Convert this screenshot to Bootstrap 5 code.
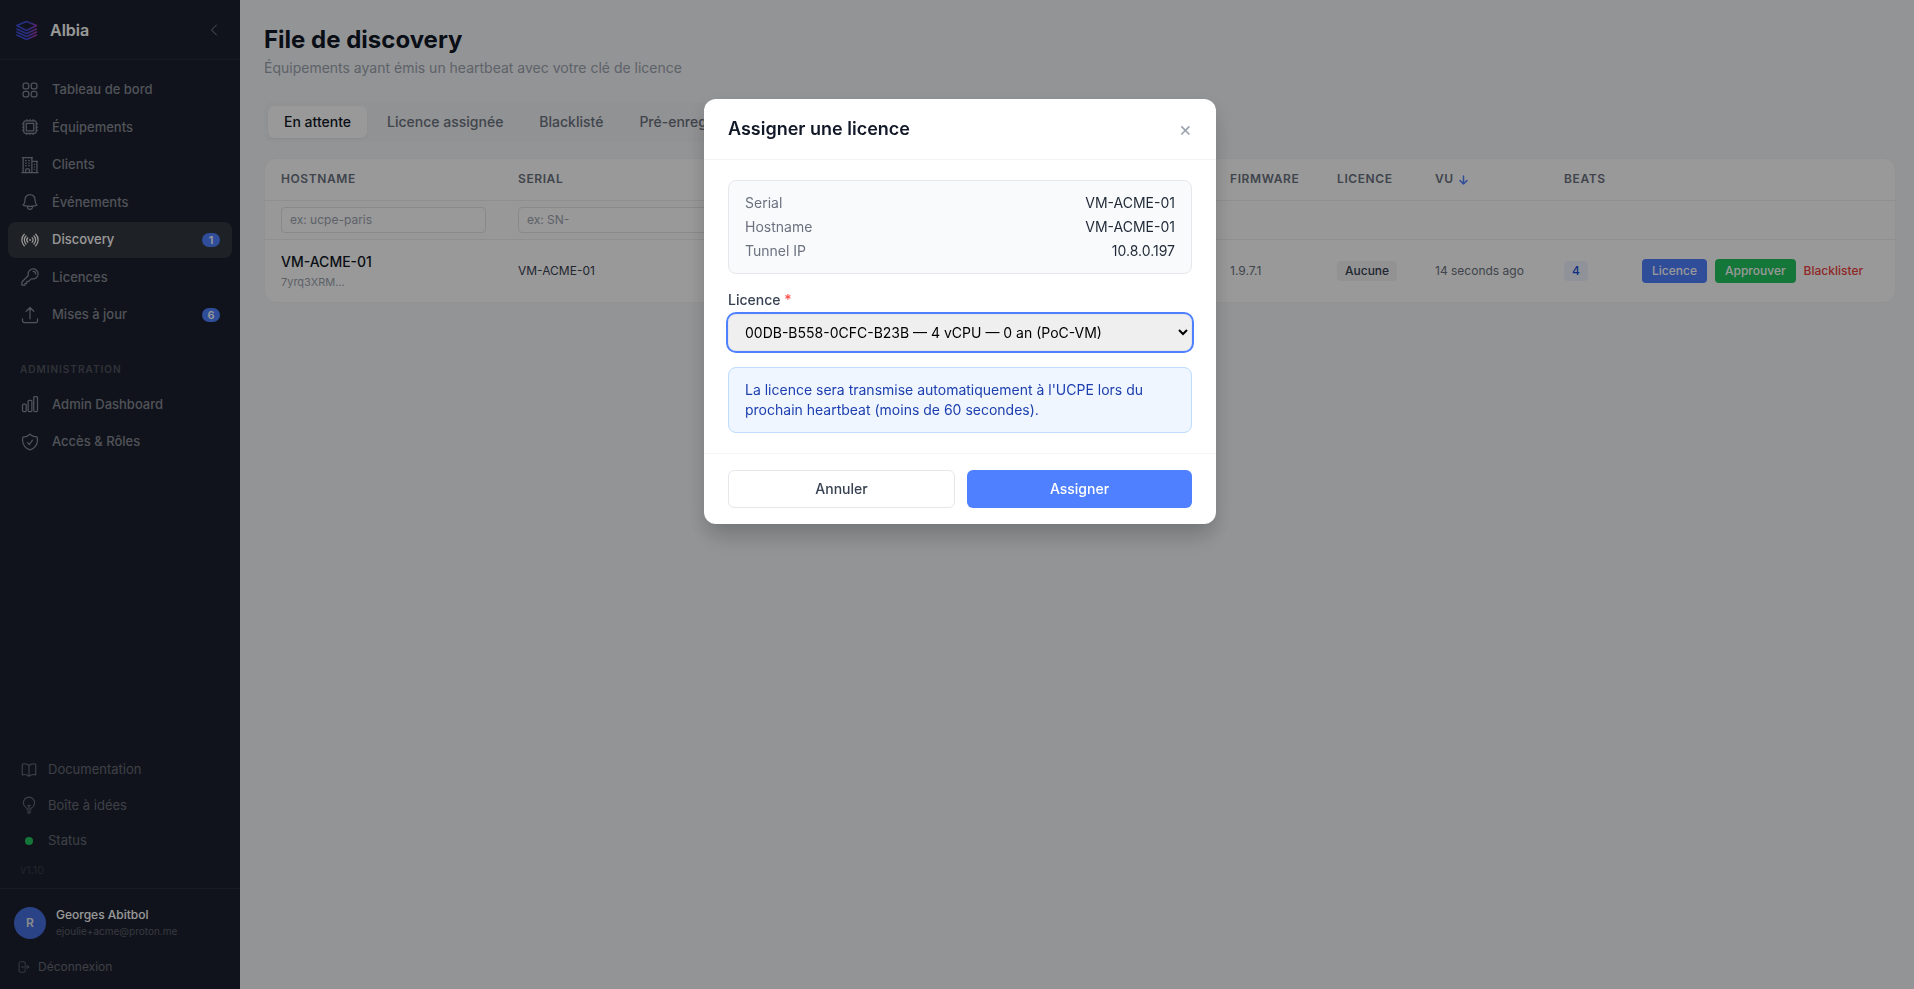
<!DOCTYPE html>
<html lang="fr">
<head>
<meta charset="utf-8">
<meta name="viewport" content="width=device-width, initial-scale=1">
<title>Albia – File de discovery</title>
<link href="https://cdn.jsdelivr.net/npm/bootstrap@5.3.0/dist/css/bootstrap.min.css" rel="stylesheet">
<style>
  body { font-family: Inter, "Liberation Sans", sans-serif; font-size: 14px; line-height: 20px; background: #f5f7fa; color: #111827; }
  a { text-decoration: none; }
  .ico { fill: none; stroke: currentColor; stroke-width: 1.5; stroke-linecap: round; stroke-linejoin: round; flex: none; }

  /* Sidebar */
  .sidebar { width: 240px; background: #1c212e; color: #868a94; font-size: 13px; line-height: 1.5; }
  .brand { height: 60px; padding: 0 18px 0 16px; border-bottom: 1px solid #282d3a; }
  .brand-name { font-size: 16px; font-weight: 600; color: #fff; }
  .collapse-btn { color: #868a94; }
  .menu { padding: 12px 8px; gap: 2px; }
  .menu a { color: #868a94; font-weight: 500; padding: 8px 12px; gap: 12px; border-radius: 8px; }
  .menu a .ico { margin-block: -1px; }
  .menu a.active { background: #33373f; color: #fff; }
  .count { width: 18px; height: 14px; border-radius: 7px; background: #4f80ff; color: #fff; font-size: 11px; font-weight: 600; line-height: 14px; }
  .menu-title { padding: 26px 12px 8px; font-size: 10px; line-height: 16px; font-weight: 600; letter-spacing: 1px; color: #50545e; }
  .links { padding: 0 8px; }
  .links a { color: #686c76; padding: 8px 12px; gap: 10px; }
  .dot { width: 8px; height: 8px; margin: 0 5px; border-radius: 50%; background: #22c55e; }
  .version { padding: 3px 20px 10px; font-size: 11px; color: #373c48; }
  .account { border-top: 1px solid #282d3a; padding: 18px 14px 13px; }
  .person { gap: 10px; }
  .avatar { width: 32px; height: 32px; border-radius: 50%; background: #466fe0; color: #e5e7eb; font-size: 12px; font-weight: 600; }
  .user-name { font-size: 12px; font-weight: 500; line-height: 16px; color: #fff; }
  .user-mail { font-size: 10px; line-height: 16px; color: #5c606b; }
  .logout { margin-top: 19px; padding-left: 2px; color: #686c76; font-size: 12px; }

  /* Page */
  .page { padding: 24px 18px 24px 24px; }
  .page h1 { font-size: 24px; line-height: 32px; font-weight: 700; }
  .subtitle { margin: 2px 0 0; color: #9ca3af; }
  .tabs { padding: 4px; gap: 4px; border-radius: 8px; background: #f2f3f5; margin-top: 24px; }
  .tabs .btn { --bs-btn-padding-y: 6px; --bs-btn-padding-x: 16px; --bs-btn-font-size: 14px; --bs-btn-line-height: 20px; --bs-btn-font-weight: 500; --bs-btn-color: #6b7280; --bs-btn-border-radius: 6px; border: 0; }
  .tabs .btn.active { background: #fff; color: #111827; box-shadow: 0 1px 2px rgba(0,0,0,.06); }
  .queue { margin-top: 16px; border: 1px solid #f3f4f6; border-radius: 12px; overflow: hidden; background: #fff; }
  .queue table { table-layout: fixed; font-size: 12px; line-height: 16px; width: 100%; }
  .queue th, .queue td { padding: 0 16px; vertical-align: middle; color: #6b7280; }
  .queue thead tr { border-bottom: 1px solid #eceef1; }
  .queue .heads th { height: 41px; font-weight: 600; letter-spacing: .05em; }
  .sort { margin-left: 2px; stroke: #4f80ff; }
  .queue .filters td { height: 39px; background: #fdfdfe; }
  .queue .filters input { width: 100%; height: 26px; padding: 4px 8px; border: 1px solid #e1e4e8; border-radius: 4px; font-size: 12px; background: #fff; }
  .queue .filters input::placeholder { color: #9ca3af; opacity: 1; }
  .queue tbody td { height: 63px; }
  .c-name { width: 237px; } .c-fw { width: 107px; } .c-lic { width: 98px; } .c-seen { width: 129px; } .c-beats { width: 78px; } .c-act { width: 269px; }
  .host { font-size: 14px; line-height: 20px; font-weight: 500; color: #111827; }
  .queue .serial { color: #374151; }
  .key-id { font-size: 11px; color: #9ca3af; margin-top: 2px; }
  .tag { display: inline-block; padding: 2px 8px; border-radius: 4px; font-weight: 500; background: #f3f4f6; color: #374151; }
  .tag-blue { background: #eff6ff; color: #1d4ed8; }
  .act { --bs-btn-padding-y: 4px; --bs-btn-padding-x: 10px; --bs-btn-font-size: 12px; --bs-btn-line-height: 16px; --bs-btn-font-weight: 500; --bs-btn-border-radius: 4px; border: 0; }
  .blue, .blue:hover { background: #4f80ff; color: #fff; }
  .green { background: #22c55e; color: #fff; }
  .act.red { --bs-btn-padding-x: 0px; color: #ef4444; }

  /* Dialog */
  .overlay { background: rgba(0,0,0,.4); padding-left: 6px; }
  .overlay .modal-dialog { max-width: 512px; margin-top: 10vh; }
  .overlay .modal-content { border: 0; border-radius: 12px; box-shadow: 0 20px 25px -5px rgba(0,0,0,.1), 0 8px 20px rgba(0,0,0,.14); }
  .overlay .modal-header { padding: 16px 24px; border-color: #f3f4f6; }
  .overlay h2 { font-size: 18px; line-height: 28px; font-weight: 600; }
  .close-btn { font-size: 20px; line-height: 28px; color: #9ca3af; }
  .overlay .modal-body { padding: 20px 24px; }
  .facts { padding: 12px 16px; border: 1px solid #e5e7eb; border-radius: 8px; background: #f9fafb; gap: 4px; color: #6b7280; }
  .facts dt { font-weight: 400; }
  .facts dd { color: #1f2937; }
  .field { margin-top: 16px; color: #374151; font-weight: 500; margin-bottom: 4px; }
  .required { color: #ff4d4d; }
  .picker { width: 100%; height: 37px; padding: 8px 12px; border: 1px solid #e5e7eb; border-radius: 8px; background: #efefef; color: #000; outline: 2px solid #4f80ff; }
  .note { margin-top: 16px; padding: 12px 16px; border: 1px solid #bfdbfe; border-radius: 8px; background: #eff6ff; color: #1e40af; }
  .overlay .modal-footer { padding: 16px 24px; gap: 12px; border-color: #f3f4f6; }
  .foot-btn { flex: 1 1 0; margin: 0; padding: 8px 16px; border: 0; border-radius: 6px; font-size: 14px; line-height: 20px; font-weight: 500; }
  .foot-btn.plain { border: 1px solid #e5e7eb; background: #fff; color: #374151; }
</style>
</head>
<body>
<div class="d-flex min-vh-100">
  <aside class="sidebar d-flex flex-column flex-shrink-0 vh-100 sticky-top">
    <div class="brand d-flex align-items-center">
      <svg width="22" height="22" viewBox="0 0 22 22" fill="none" stroke="url(#lg)" stroke-width="1.5" stroke-linejoin="round" stroke-linecap="round" aria-hidden="true">
        <defs><linearGradient id="lg" gradientUnits="userSpaceOnUse" x1="3" y1="0" x2="22" y2="3"><stop offset="0" stop-color="#3b50e0"/><stop offset=".55" stop-color="#4449d4"/><stop offset="1" stop-color="#a83bb8"/></linearGradient></defs>
        <path d="M10.500 2.500 L20.500 6.500 L10.500 11.500 L.8 6.500Z M.8 10 L10.500 14.500 L20.500 10 M.8 13 L10.500 17.500 L20.500 13 M.8 16 L10.500 20.500 L20.500 16"/>
      </svg>
      <span class="brand-name ms-2 ps-1">Albia</span>
      <button type="button" class="collapse-btn btn p-0 border-0 ms-auto d-flex" aria-label="Réduire le menu">
        <svg class="ico" width="16" height="16" viewBox="0 0 24 24"><path d="M15.750 19.500 8.250 12l7.500-7.500"/></svg>
      </button>
    </div>

    <nav class="menu d-flex flex-column">
      <a href="#" class="d-flex align-items-center"><svg class="ico" width="20" height="20" viewBox="0 0 24 24"><path d="M3.750 6A2.250 2.250 0 016 3.750h2.250A2.250 2.250 0 0110.500 6v2.250a2.250 2.250 0 01-2.250 2.250H6a2.250 2.250 0 01-2.250-2.250V6zM3.750 15.750A2.250 2.250 0 016 13.500h2.250a2.250 2.250 0 012.250 2.250V18a2.250 2.250 0 01-2.250 2.250H6A2.250 2.250 0 013.750 18v-2.250zM13.500 6a2.250 2.250 0 012.250-2.250H18A2.250 2.250 0 0120.250 6v2.250A2.250 2.250 0 0118 10.500h-2.250a2.250 2.250 0 01-2.250-2.250V6zM13.500 15.750a2.250 2.250 0 012.250-2.250H18a2.250 2.250 0 012.250 2.250V18A2.250 2.250 0 0118 20.250h-2.250A2.250 2.250 0 0113.500 18v-2.250z"/></svg>Tableau de bord</a>
      <a href="#" class="d-flex align-items-center"><svg class="ico" width="20" height="20" viewBox="0 0 24 24"><path d="M8.250 3v1.500M4.500 8.250H3m18 0h-1.500M4.500 12H3m18 0h-1.500m-15 3.750H3m18 0h-1.500M8.250 19.500V21M12 3v1.500m0 15V21m3.750-18v1.500m0 15V21m-9-1.500h10.500a2.250 2.250 0 002.250-2.250V6.750a2.250 2.250 0 00-2.250-2.250H6.750A2.250 2.250 0 004.500 6.750v10.500a2.250 2.250 0 002.250 2.250zm.75-12h9v9h-9v-9z"/></svg>Équipements</a>
      <a href="#" class="d-flex align-items-center"><svg class="ico" width="20" height="20" viewBox="0 0 24 24"><path d="M2.250 21h19.500m-18-18v18m10.500-18v18m6-13.500V21M6.750 6.750h.75m-.75 3h.75m-.75 3h.75m3-6h.75m-.75 3h.75m-.75 3h.75M6.750 21v-3.375c0-.621.504-1.125 1.125-1.125h2.250c.621 0 1.125.504 1.125 1.125V21M3 3h12m-.75 4.500H21m-3.750 3.750h.008v.008h-.008v-.008zm0 3h.008v.008h-.008v-.008zm0 3h.008v.008h-.008v-.008z"/></svg>Clients</a>
      <a href="#" class="d-flex align-items-center"><svg class="ico" width="20" height="20" viewBox="0 0 24 24"><path d="M14.857 17.082a23.848 23.848 0 005.454-1.310A8.967 8.967 0 0118 9.750v-.7V9A6 6 0 006 9v.75a8.967 8.967 0 01-2.312 6.022c1.733.64 3.560 1.085 5.455 1.310m5.714 0a24.255 24.255 0 01-5.714 0m5.714 0a3 3 0 11-5.714 0"/></svg>Événements</a>
      <a href="#" class="d-flex align-items-center active" aria-current="page"><svg class="ico" width="20" height="20" viewBox="0 0 24 24"><path d="M9.348 14.651a3.750 3.750 0 010-5.303m5.304 0a3.750 3.750 0 010 5.304m-7.425 2.122a6.750 6.750 0 010-9.546m9.546 0a6.750 6.750 0 010 9.546M5.106 18.894c-3.808-3.808-3.808-9.980 0-13.789m13.788 0c3.808 3.808 3.808 9.981 0 13.790M12 12h.008v.007H12V12zm.375 0a.375.375 0 11-.75 0 .375.375 0 01.75 0z"/></svg>Discovery<span class="count ms-auto text-center">1</span></a>
      <a href="#" class="d-flex align-items-center"><svg class="ico" width="20" height="20" viewBox="0 0 24 24"><path d="M15.750 5.250a3 3 0 013 3m3 0a6 6 0 01-7.029 5.912c-.563-.097-1.159.026-1.563.430L10.500 17.250H8.250v2.250H6v2.250H2.250v-2.818c0-.597.237-1.170.659-1.591l6.499-6.499c.404-.404.527-1 .430-1.563A6 6 0 1121.750 8.250z"/></svg>Licences</a>
      <a href="#" class="d-flex align-items-center"><svg class="ico" width="20" height="20" viewBox="0 0 24 24"><path d="M3 16.500v2.250A2.250 2.250 0 005.250 21h13.500A2.250 2.250 0 0021 18.750V16.500m-13.500-9L12 3m0 0l4.500 4.500M12 3v13.500"/></svg>Mises à jour<span class="count ms-auto text-center">6</span></a>
      <div class="menu-title">ADMINISTRATION</div>
      <a href="#" class="d-flex align-items-center"><svg class="ico" width="20" height="20" viewBox="0 0 24 24"><path d="M3 13.125C3 12.504 3.504 12 4.125 12h2.250c.621 0 1.125.504 1.125 1.125v6.750C7.500 20.496 6.996 21 6.375 21h-2.250A1.125 1.125 0 013 19.875v-6.750zM9.750 8.625c0-.621.504-1.125 1.125-1.125h2.250c.621 0 1.125.504 1.125 1.125v11.250c0 .621-.504 1.125-1.125 1.125h-2.250a1.125 1.125 0 01-1.125-1.125V8.625zM16.500 4.125c0-.621.504-1.125 1.125-1.125h2.250C20.496 3 21 3.504 21 4.125v15.750c0 .621-.504 1.125-1.125 1.125h-2.250a1.125 1.125 0 01-1.125-1.125V4.125z"/></svg>Admin Dashboard</a>
      <a href="#" class="d-flex align-items-center"><svg class="ico" width="20" height="20" viewBox="0 0 24 24"><path d="M9 12.750L11.250 15 15 9.750m-3-7.036A11.959 11.959 0 013.598 6 11.990 11.990 0 003 9.749c0 5.592 3.824 10.290 9 11.623 5.176-1.332 9-6.030 9-11.622 0-1.310-.21-2.571-.598-3.751h-.152c-3.196 0-6.100-1.248-8.250-3.285z"/></svg>Accès &amp; Rôles</a>
    </nav>

    <div class="mt-auto">
      <nav class="links d-flex flex-column">
        <a href="#" class="d-flex align-items-center"><svg class="ico" width="18" height="18" viewBox="0 0 24 24"><path d="M12 6.042A8.967 8.967 0 006 3.750c-1.052 0-2.062.18-3 .512v14.250A8.987 8.987 0 016 18c2.305 0 4.408.867 6 2.292m0-14.250a8.966 8.966 0 016-2.292c1.052 0 2.062.18 3 .512v14.250A8.987 8.987 0 0018 18a8.967 8.967 0 00-6 2.292m0-14.250v14.250"/></svg>Documentation</a>
        <a href="#" class="d-flex align-items-center"><svg class="ico" width="18" height="18" viewBox="0 0 24 24"><path d="M12 18v-5.250m0 0a6.010 6.010 0 001.500-.189m-1.500.189a6.010 6.010 0 01-1.500-.189m3.750 7.478a12.060 12.060 0 01-4.500 0m3.750 2.383a14.406 14.406 0 01-3 0M14.250 18v-.192c0-.983.658-1.823 1.508-2.316a7.500 7.500 0 10-7.517 0c.85.493 1.509 1.333 1.509 2.316V18"/></svg>Boîte à idées</a>
        <a href="#" class="d-flex align-items-center"><span class="dot"></span>Status</a>
      </nav>
      <div class="version">v1.10</div>
      <div class="account">
        <div class="person d-flex align-items-center">
          <span class="avatar d-flex align-items-center justify-content-center">R</span>
          <div><div class="user-name">Georges Abitbol</div><div class="user-mail">ejoulie+acme@proton.me</div></div>
        </div>
        <a href="#" class="logout d-flex align-items-center gap-2"><svg class="ico" width="14" height="14" viewBox="0 0 24 24"><path d="M15.750 9V5.250A2.250 2.250 0 0013.500 3h-6a2.250 2.250 0 00-2.250 2.250v13.500A2.250 2.250 0 007.500 21h6a2.250 2.250 0 002.250-2.250V15m3 0l3-3m0 0l-3-3m3 3H9"/></svg>Déconnexion</a>
      </div>
    </div>
  </aside>

  <main class="page flex-grow-1">
    <h1 class="mb-0">File de discovery</h1>
    <p class="subtitle">Équipements ayant émis un heartbeat avec votre clé de licence</p>
    <div class="tabs d-inline-flex">
      <button type="button" class="btn active">En attente</button>
      <button type="button" class="btn">Licence assignée</button>
      <button type="button" class="btn">Blacklisté</button>
      <button type="button" class="btn">Pré-enregistré</button>
    </div>
    <section class="queue">
      <table>
        <colgroup><col class="c-name"><col class="c-name"><col><col class="c-fw"><col class="c-lic"><col class="c-seen"><col class="c-beats"><col class="c-act"></colgroup>
        <thead>
          <tr class="heads"><th>HOSTNAME</th><th>SERIAL</th><th></th><th>FIRMWARE</th><th>LICENCE</th>
            <th>VU <svg class="ico sort" width="9" height="10" viewBox="0 0 9 10"><path d="M4.500 1v8M1 5.500 4.500 9 8 5.500"/></svg></th><th>BEATS</th><th></th></tr>
          <tr class="filters"><td><input type="text" placeholder="ex: ucpe-paris" aria-label="Filtrer par hostname"></td><td><input type="text" placeholder="ex: SN-" aria-label="Filtrer par serial"></td><td colspan="6"></td></tr>
        </thead>
        <tbody>
          <tr>
            <td><div class="host">VM-ACME-01</div><div class="key-id">7yrq3XRM...</div></td>
            <td class="serial">VM-ACME-01</td><td></td><td>1.9.7.1</td>
            <td><span class="tag">Aucune</span></td><td>14 seconds ago</td><td><span class="tag tag-blue">4</span></td>
            <td><div class="d-flex gap-2 align-items-center"><button type="button" class="btn act blue">Licence</button><button type="button" class="btn act green">Approuver</button><button type="button" class="btn act red">Blacklister</button></div></td>
          </tr>
        </tbody>
      </table>
    </section>
  </main>
</div>

<div class="modal overlay d-block" role="dialog" aria-modal="true" aria-labelledby="dlg-title">
  <div class="modal-dialog">
    <div class="modal-content">
      <div class="modal-header">
        <h2 class="mb-0" id="dlg-title">Assigner une licence</h2>
        <button type="button" class="close-btn btn p-0 border-0" aria-label="Fermer">×</button>
      </div>
      <div class="modal-body">
        <dl class="facts d-flex flex-column mb-0">
          <div class="d-flex justify-content-between"><dt>Serial</dt><dd class="mb-0">VM-ACME-01</dd></div>
          <div class="d-flex justify-content-between"><dt>Hostname</dt><dd class="mb-0">VM-ACME-01</dd></div>
          <div class="d-flex justify-content-between"><dt>Tunnel IP</dt><dd class="mb-0">10.8.0.197</dd></div>
        </dl>
        <label for="lic" class="field d-block">Licence <span class="required">*</span></label>
        <select id="lic" class="picker d-block"><option>00DB-B558-0CFC-B23B — 4 vCPU — 0 an (PoC-VM)</option></select>
        <div class="note">La licence sera transmise automatiquement à l'UCPE lors du prochain heartbeat (moins de 60 secondes).</div>
      </div>
      <div class="modal-footer flex-nowrap align-items-stretch">
        <button type="button" class="btn foot-btn plain">Annuler</button>
        <button type="button" class="btn foot-btn blue">Assigner</button>
      </div>
    </div>
  </div>
</div>
<script src="https://cdn.jsdelivr.net/npm/bootstrap@5.3.0/dist/js/bootstrap.bundle.min.js"></script>
</body>
</html>
